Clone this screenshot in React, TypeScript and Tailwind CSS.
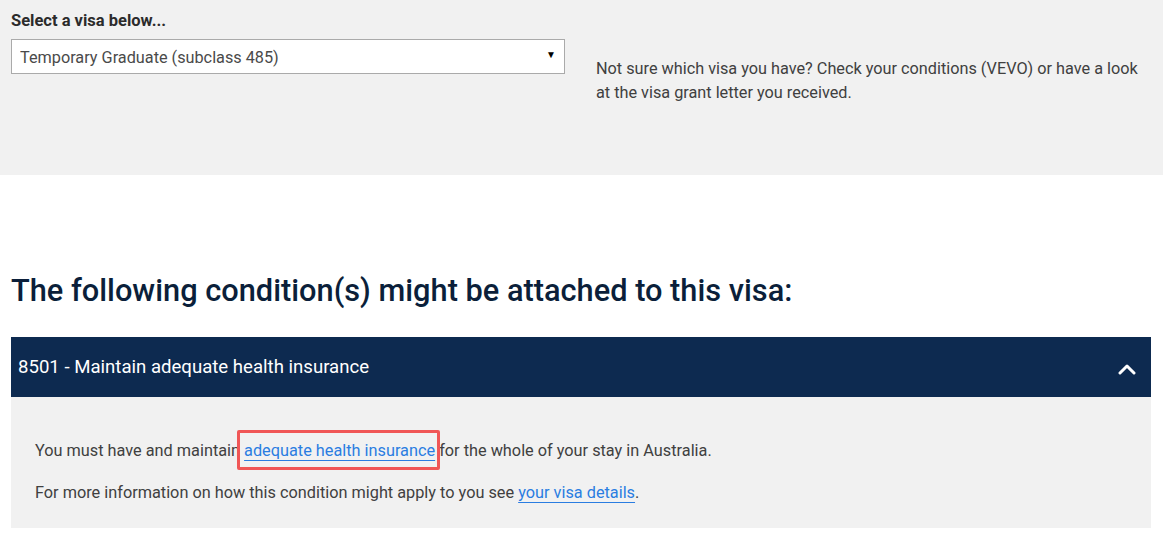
import { useState } from "react";

export default function App() {
  const [open, setOpen] = useState(true);

  return (
    <div className="min-h-[540px] bg-white text-[#333] font-['Roboto',sans-serif]">
      {/* visa picker */}
      <section className="h-[175px] bg-[#f1f1f1] px-[11px] pt-[11px]">
        <div className="flex items-start gap-[31px]">
          <div className="w-[554px] shrink-0">
            <label className="block text-[16.5px] leading-[20px] font-bold text-[#2b2b2b] mb-[8px]">
              Select a visa below...
            </label>
            <div className="relative">
              <select
                defaultValue="485"
                className="w-full h-[35px] appearance-none bg-white border border-[#aaa] pl-[8px] pr-[30px] pt-[3px] text-[16.25px] text-[#4a4a4a] outline-none"
              >
                <option value="485">Temporary Graduate (subclass 485)</option>
                <option value="500">Student (subclass 500)</option>
                <option value="482">Temporary Skill Shortage (subclass 482)</option>
              </select>
              <span className="pointer-events-none absolute right-[9px] top-[10px] text-[10px] leading-[12px] text-black">
                ▼
              </span>
            </div>
          </div>
          <p className="mt-[46px] text-[16.25px] leading-[24px] text-[#404040] w-[556px]">
            Not sure which visa you have? Check your conditions (VEVO) or have a look at the visa grant letter you received.
          </p>
        </div>
      </section>

      {/* conditions */}
      <section className="pl-[11px] pr-[12px] pt-[96px] pb-[12px]">
        <h2 className="text-[30.75px] leading-[40px] font-medium text-[#0b1f3a] mb-[26px]">
          The following condition(s) might be attached to this visa:
        </h2>

        <div>
          <button
            onClick={() => setOpen(!open)}
            className="w-full h-[60px] bg-[#0d2a50] flex items-center justify-between pl-[7px] pr-[15px] text-left"
          >
            <span className="text-white text-[18.6px] leading-[24px]">8501 - Maintain adequate health insurance</span>
            <svg width="18" height="12" viewBox="0 0 18 12" className={open ? "mt-[4px]" : "mt-[4px] rotate-180"}>
              <polyline points="2,10 9,3 16,10" fill="none" stroke="#fff" strokeWidth="3" strokeLinecap="round" strokeLinejoin="round" />
            </svg>
          </button>
          {open && (
            <div className="bg-[#f1f1f1] pt-[42px] pb-[23px] px-[24px] text-[16.3px] leading-[24px] text-[#404040]">
              <p className="mb-[18px]">
                You must have and maintain{" "}
                <span className="relative">
                  <a href="#" className="text-[#2a7de1] underline underline-offset-[4px] decoration-1">
                    adequate health insurance
                  </a>
                  <span className="pointer-events-none absolute -left-[7px] -right-[5px] -top-[11px] -bottom-[10px] border-[3px] border-[#f05656] rounded-[2px]" />
                </span>{" "}
                for the whole of your stay in Australia.
              </p>
              <p>
                For more information on how this condition might apply to you see{" "}
                <a href="#" className="text-[#2a7de1] underline underline-offset-[4px] decoration-1">
                  your visa details
                </a>
                .
              </p>
            </div>
          )}
        </div>
      </section>
    </div>
  );
}
